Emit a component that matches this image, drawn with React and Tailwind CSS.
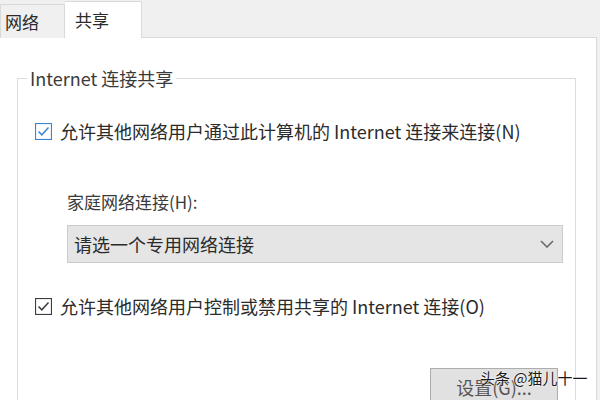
import React from "react"

/* ___ small check box drawn as a box + tick ___ */
function CheckBox({ color }) {
  return (
    <svg width="17" height="17" viewBox="0 0 17 17" className="shrink-0">
      <rect x="0.5" y="0.5" width="16" height="16" fill="white" stroke={color} strokeWidth="1.2" />
      <polyline points="3.5,8.5 6.8,11.8 13.5,4.5" fill="none" stroke={color} strokeWidth="1.5" />
    </svg>
  )
}

export default function App() {
  return (
    <div
      className="relative w-[600px] h-[400px] overflow-hidden bg-[#f0f0f0] text-[#2b2b2b] text-[18px]"
      style={{ fontFamily: '"Noto Sans CJK SC", "Noto Sans", sans-serif' }}
    >
      {/* ___ tab strip ___ */}
      <div className="flex items-end h-[38px]">
        <div className="w-[65px] h-[34px] border border-b-0 border-[#d9d9d9] bg-[#f0f0f0] flex items-center pl-[4px] leading-[20px] text-[17px]">
          网络
        </div>
        <div className="relative z-10 w-[77px] h-[37px] border border-b-0 border-l-0 border-[#d9d9d9] bg-white flex items-center pl-[10px] leading-[20px] text-[17px]">
          共享
        </div>
      </div>

      {/* ___ tab panel ___ */}
      <div className="-mt-px w-[597px] h-[370px] border-t border-r border-[#dadada] bg-white pt-[40px] pl-[17px]">
        <div className="relative w-[559px] h-[400px] border-l border-t border-r border-[#dcdcdc] pt-[42px] pl-[17px]">
          <span className="absolute left-[9px] -top-[11px] bg-white px-[3px] leading-[20px] text-[18px] text-[#3a3a3a]">
            Internet 连接共享
          </span>

          <div className="flex items-center gap-[8px] h-[20px] leading-[20px]">
            <CheckBox color="#3a86d6" />
            <span>允许其他网络用户通过此计算机的 Internet 连接来连接(N)</span>
          </div>

          <div className="mt-[51px] ml-[32px] h-[20px] leading-[20px] text-[17px] text-[#3a3a3a]">
            家庭网络连接(H):
          </div>

          <div className="mt-[13px] ml-[32px] w-[496px] h-[38px] bg-[#e5e5e5] border border-[#cccccc] flex items-center justify-between pl-[6px] pr-[8px]">
            <span className="leading-[20px]">请选一个专用网络连接</span>
            <svg width="14" height="8" viewBox="0 0 14 8">
              <polyline points="1,1 7,7 13,1" fill="none" stroke="#6a6a6a" strokeWidth="1.6" />
            </svg>
          </div>

          <div className="mt-[33px] flex items-center gap-[8px] h-[20px] leading-[20px]">
            <CheckBox color="#3c3c3c" />
            <span>允许其他网络用户控制或禁用共享的 Internet 连接(O)</span>
          </div>

          <div className="mt-[52px] ml-[395px] w-[128px] h-[38px] bg-[#e1e1e1] border border-[#adadad] flex items-center justify-center leading-[20px] text-[#555]">
            设置(G)...
          </div>
        </div>
      </div>

      {/* ___ watermark over content ___ */}
      <div
        className="absolute left-[480px] top-[368px] text-[15px] leading-[20px] text-[#1a1a1a]"
        style={{ textShadow: "0 0 2px #fff, 0 0 2px #fff" }}
      >
        头条 @猫儿十一
      </div>
    </div>
  )
}
